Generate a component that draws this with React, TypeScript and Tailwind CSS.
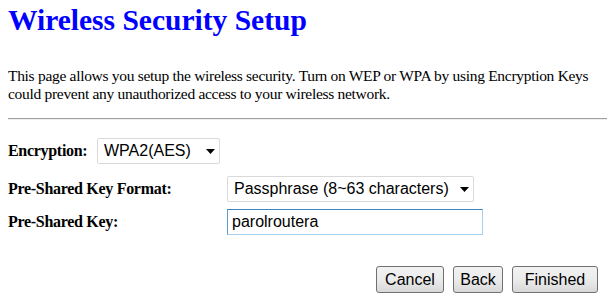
import React from "react"

const Arrow = () => (
  <svg width="9" height="5" viewBox="0 0 9 5" className="shrink-0">
    <path d="M0 0 H9 L4.5 5 Z" fill="#000" />
  </svg>
)

const FakeSelect = ({ value, width }: { value: string; width: string }) => (
  <div
    className={`${width} flex h-[26px] items-center justify-between rounded-[2px] border border-[#d9d9d9] bg-white pl-[6px] pr-[4px] font-['Liberation_Sans',Arial,sans-serif] text-[16px] leading-none text-black`}
  >
    <span>{value}</span>
    <Arrow />
  </div>
)

const Btn = ({ label, width }: { label: string; width: string }) => (
  <button
    className={`${width} h-[27px] rounded-[3px] border border-[#707070] bg-gradient-to-b from-[#f2f2f2] via-[#ebebeb] to-[#d8d8d8] font-['Liberation_Sans',Arial,sans-serif] text-[16px] leading-none text-black`}
  >
    {label}
  </button>
)

export default function App() {
  return (
    <div className="h-[307px] w-[607px] overflow-hidden bg-white pl-2 font-['Liberation_Serif','Times_New_Roman',serif] text-black">
      <h1 className="mt-[4px] whitespace-nowrap text-[29.5px] font-bold leading-[33px] text-[#0000ff]">
        Wireless Security Setup
      </h1>

      <p className="mt-[30px] whitespace-nowrap text-[15.5px] leading-[18px] tracking-[-0.3px]">
        This page allows you setup the wireless security. Turn on WEP or WPA by using Encryption Keys
        <br />
        could prevent any unauthorized access to your wireless network.
      </p>

      <div className="mt-[15px] h-[2px] border-t border-t-[#a0a0a0] border-b border-b-[#eeeeee]" />

      <div className="mt-[18px] flex items-center">
        <span className="w-[89px] text-[16px] font-bold tracking-[-0.3px]">Encryption:</span>
        <FakeSelect value="WPA2(AES)" width="w-[123px]" />
      </div>

      <div className="mt-[12px] flex items-center">
        <span className="w-[219px] text-[16px] font-bold tracking-[-0.3px]">Pre-Shared Key Format:</span>
        <FakeSelect value="Passphrase (8~63 characters)" width="w-[247px]" />
      </div>

      <div className="mt-[7px] flex items-center">
        <span className="w-[219px] text-[16px] font-bold tracking-[-0.3px]">Pre-Shared Key:</span>
        <div className="flex h-[26px] w-[256px] items-center border border-[#a6d0ee] border-t-[#3f83bd] border-l-[#5e9bd0] bg-white pl-[4px] font-['Liberation_Sans',Arial,sans-serif] text-[16px] leading-none">
          parolroutera
        </div>
      </div>

      <div className="mt-[31px] flex justify-end gap-[9px] pr-[9px]">
        <Btn label="Cancel" width="w-[68px]" />
        <Btn label="Back" width="w-[50px]" />
        <Btn label="Finished" width="w-[86px]" />
      </div>
    </div>
  )
}
